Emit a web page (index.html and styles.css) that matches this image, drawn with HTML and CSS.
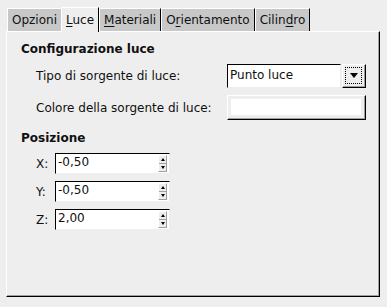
FILE: index.html
```html
<!DOCTYPE html>
<html lang="it">
<head>
    <meta charset="UTF-8">
    <title>Luce</title>
    <link rel="stylesheet" href="styles.css">
</head>
<body>

    <div class="notebook">
        <div class="tabs">
            <div class="tab">Opzioni</div>
            <div class="tab active"><u>L</u>uce</div>
            <div class="tab"><u>M</u>ateriali</div>
            <div class="tab">O<u>r</u>ientamento</div>
            <div class="tab">Cilin<u>d</u>ro</div>
        </div>

        <div class="page">
            <h3>Configurazione luce</h3>
            <div class="row">
                <label class="wide">Tipo di sorgente di luce:</label>
                <div class="combo">
                    <div class="combo-entry">Punto luce</div>
                    <div class="combo-btn"><span class="focus"><span class="down"></span></span></div>
                </div>
            </div>
            <div class="row">
                <label class="wide">Colore della sorgente di luce:</label>
                <div class="color-btn"><span class="swatch"></span></div>
            </div>

            <h3 class="second">Posizione</h3>
            <div class="row spin-row">
                <label class="axis">X:</label>
                <div class="spin"><span class="value">-0,50</span><span class="arrows"><i class="up"></i><i class="dn"></i></span></div>
            </div>
            <div class="row spin-row">
                <label class="axis">Y:</label>
                <div class="spin"><span class="value">-0,50</span><span class="arrows"><i class="up"></i><i class="dn"></i></span></div>
            </div>
            <div class="row spin-row">
                <label class="axis">Z:</label>
                <div class="spin"><span class="value">2,00</span><span class="arrows"><i class="up"></i><i class="dn"></i></span></div>
            </div>
        </div>
    </div>

</body>
</html>
```

FILE: styles.css
```css
body {
    margin: 0;
    background-color: #eeeeee;
    font-family: 'DejaVu Sans', Verdana, sans-serif;
    font-size: 12px;
    color: #101010;
}

.notebook {
    padding: 7px 0 0 6px;
    width: 374px;
}

.tabs {
    display: flex;
    align-items: flex-end;
    padding-left: 1px;
    height: 24px;
}

.tab {
    box-sizing: border-box;
    height: 23px;
    padding: 4px 4px 0 4px;
    background-color: #c8c8c8;
    border-top: 1px solid #ffffff;
    border-left: 1px solid #ffffff;
    border-right: 1px solid #000000;
    white-space: nowrap;
}

.tab:first-child {
    border-right: none;
    padding-right: 4px;
}

.tab.active {
    height: 25px;
    background-color: #eeeeee;
    margin-bottom: -1px;
    position: relative;
    z-index: 1;
    padding-top: 5px;
}

.tab u {
    text-decoration-thickness: 1px;
    text-underline-offset: 2px;
}

.page {
    box-sizing: border-box;
    height: 266px;
    border-top: 1px solid #ffffff;
    border-left: 1px solid #ffffff;
    border-right: 1px solid #000000;
    border-bottom: 1px solid #000000;
    box-shadow: inset -1px -1px 0 #a0a0a0;
    padding: 9px 0 0 14px;
}

h3 {
    margin: 0 0 7px 0;
    font-size: 12px;
    font-weight: bold;
    line-height: 16px;
}

h3.second {
    margin-top: 10px;
    margin-bottom: 7px;
}

.row {
    display: flex;
    align-items: center;
    margin-left: 15px;
    margin-bottom: 7px;
}

label.wide {
    width: 191px;
}

label.axis {
    width: 19px;
}

.combo {
    display: flex;
    height: 24px;
}

.combo-entry {
    box-sizing: border-box;
    width: 114px;
    background: #ffffff;
    border-top: 1px solid #000000;
    border-left: 1px solid #000000;
    border-right: 1px solid #eeeeee;
    border-bottom: 1px solid #eeeeee;
    padding: 3px 0 0 2px;
}

.combo-btn {
    box-sizing: border-box;
    width: 24px;
    margin-left: 1px;
    background: #eeeeee;
    border-top: 1px solid #ffffff;
    border-left: 1px solid #ffffff;
    border-right: 1px solid #000000;
    border-bottom: 1px solid #000000;
    box-shadow: inset -1px -1px 0 #a0a0a0;
    padding: 2px 3px 3px 2px;
}

.focus {
    display: flex;
    align-items: center;
    justify-content: center;
    box-sizing: border-box;
    height: 100%;
    border: 1px dotted #000000;
}

.down {
    width: 0;
    height: 0;
    border-left: 4px solid transparent;
    border-right: 4px solid transparent;
    border-top: 5px solid #000000;
}

.color-btn {
    box-sizing: border-box;
    width: 139px;
    height: 25px;
    border-top: 1px solid #ffffff;
    border-left: 1px solid #ffffff;
    border-right: 1px solid #000000;
    border-bottom: 1px solid #000000;
    box-shadow: inset -1px -1px 0 #a0a0a0;
    padding: 3px 4px 4px 3px;
}

.swatch {
    display: block;
    height: 100%;
    background: #ffffff;
}

.spin-row {
    margin-bottom: 7px;
}

.spin {
    box-sizing: border-box;
    display: flex;
    width: 115px;
    height: 21px;
    background: #ffffff;
    border-top: 1px solid #000000;
    border-left: 1px solid #000000;
    border-right: 1px solid #eeeeee;
    border-bottom: 1px solid #eeeeee;
}

.spin .value {
    flex: 1;
    padding: 1px 0 0 2px;
}

.arrows {
    box-sizing: border-box;
    display: flex;
    flex-direction: column;
    width: 9px;
    margin: 1px 2px 1px 0;
    border: 1px solid #a0a0a0;
    border-top-color: #ffffff;
    border-left-color: #ffffff;
}

.arrows i {
    flex: 1;
    display: flex;
    align-items: center;
    justify-content: center;
    background: #eeeeee;
}

.arrows i.up {
    border-bottom: 1px solid #a0a0a0;
}

.arrows i.up::after {
    content: "";
    border-left: 2px solid transparent;
    border-right: 2px solid transparent;
    border-bottom: 3px solid #000000;
}

.arrows i.dn::after {
    content: "";
    border-left: 2px solid transparent;
    border-right: 2px solid transparent;
    border-top: 3px solid #000000;
}
```
